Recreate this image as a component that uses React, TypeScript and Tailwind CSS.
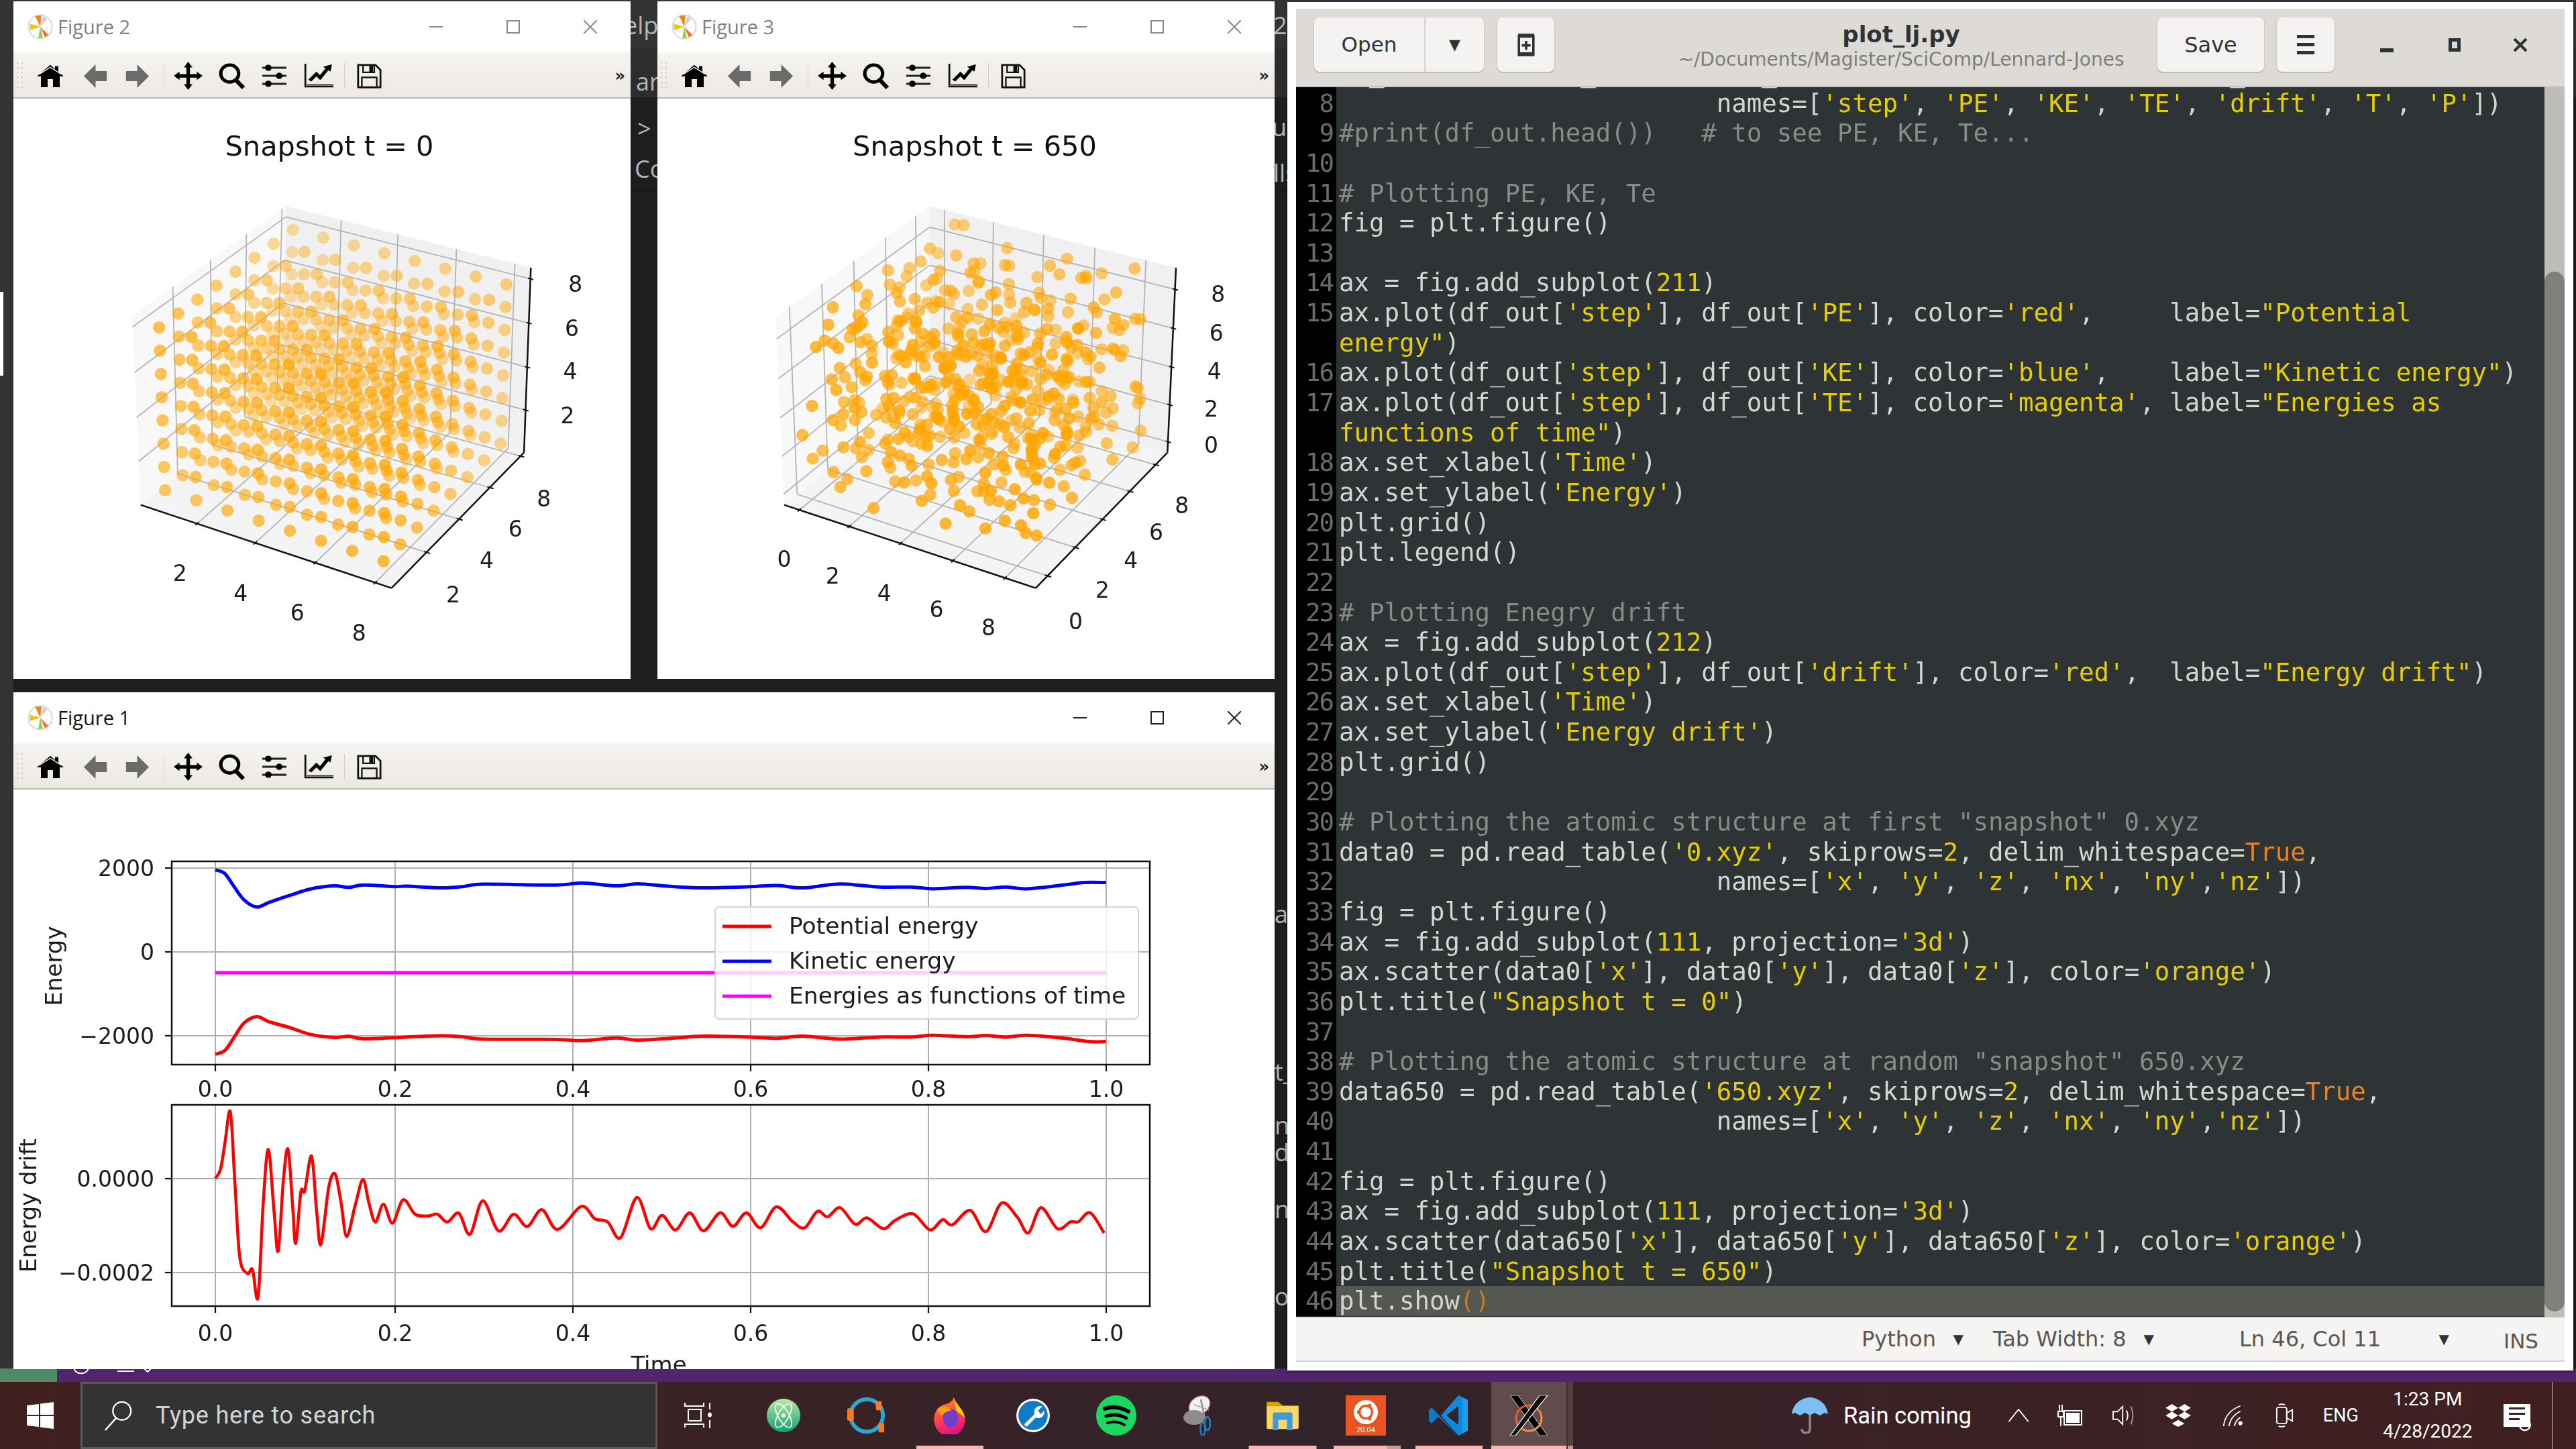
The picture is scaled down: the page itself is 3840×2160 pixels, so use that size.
import React from "react";

type V = [number, number];
const lerp = (a: V, b: V, t: number): V => [a[0] + (b[0] - a[0]) * t, a[1] + (b[1] - a[1]) * t];

function smooth(pts: V[]): string {
  let d = `M${pts[0][0].toFixed(1)} ${pts[0][1].toFixed(1)}`;
  for (let i = 0; i < pts.length - 1; i++) {
    const p0 = pts[i - 1] || pts[i];
    const p1 = pts[i];
    const p2 = pts[i + 1];
    const p3 = pts[i + 2] || p2;
    const c1: V = [p1[0] + (p2[0] - p0[0]) / 6, p1[1] + (p2[1] - p0[1]) / 6];
    const c2: V = [p2[0] - (p3[0] - p1[0]) / 6, p2[1] - (p3[1] - p1[1]) / 6];
    d += `C${c1[0].toFixed(1)} ${c1[1].toFixed(1)} ${c2[0].toFixed(1)} ${c2[1].toFixed(1)} ${p2[0].toFixed(1)} ${p2[1].toFixed(1)}`;
  }
  return d;
}

function prng(seed: number) {
  let a = seed;
  return () => {
    a |= 0;
    a = (a + 0x6d2b79f5) | 0;
    let t = Math.imul(a ^ (a >>> 15), 1 | a);
    t = (t + Math.imul(t ^ (t >>> 7), 61 | t)) ^ t;
    return ((t ^ (t >>> 14)) >>> 0) / 4294967296;
  };
}

type Cfg = {
  ox: number; oy: number;
  A: V; B: V; C: V; D: V; Ap: V; Bp: V; Cp: V; Dp: V;
  xt: number[]; yt: number[]; zt: number[];
  xl: [string, number, number][]; yl: [string, number, number][]; zl: [string, number, number][];
  title: string; tx: number;
  dots: [number, number, number][];
  vb: string;
  base: number;
  span: number;
};

const grid3: [number, number, number][] = [];
for (let i = 0; i < 8; i++) for (let j = 0; j < 8; j++) for (let k = 0; k < 8; k++)
  grid3.push([0.06 + (0.87 * i) / 7, 0.07 + (0.88 * j) / 7, 0.06 + (0.86 * k) / 7]);

const rnd = prng(650);
const scatter: [number, number, number][] = [];
for (let i = 0; i < 8; i++) for (let j = 0; j < 8; j++) for (let k = 0; k < 8; k++)
  scatter.push([
    0.1 + (0.8 * i) / 7 + (rnd() - 0.5) * 0.12,
    0.1 + (0.8 * j) / 7 + (rnd() - 0.5) * 0.12,
    0.13 + (0.8 * k) / 7 + (rnd() - 0.5) * 0.12,
  ]);

function Cube({ c }: { c: Cfg }) {
  const S = (p: V): V => [c.ox + p[0] * 0.5102, c.oy + p[1] * 0.4592];
  const h = (a: V, b: V): V => [b[0] - a[0], b[1] - a[1]];
  const hA = h(c.A, c.Ap), hB = h(c.B, c.Bp), hC = h(c.C, c.Cp), hD = h(c.D, c.Dp);
  const proj = (t: number, u: number, v: number): V => {
    const f = lerp(lerp(c.A, c.B, t), lerp(c.D, c.C, t), u);
    const hh = lerp(lerp(hA, hB, t), lerp(hD, hC, t), u);
    return S([f[0] + hh[0] * v, f[1] + hh[1] * v]);
  };
  const poly = (ps: V[]) => ps.map((p) => S(p).map((n) => n.toFixed(1)).join(",")).join(" ");
  const L = ({ a, b, k = "#b4b4b4", w = 1.8 }: { a: V; b: V; k?: string; w?: number }) => (
    <line x1={a[0]} y1={a[1]} x2={b[0]} y2={b[1]} stroke={k} strokeWidth={w} />
  );
  const sorted = [...c.dots].sort((p, q) => q[1] - q[0] * 0.4 - q[2] * 0.2 - (p[1] - p[0] * 0.4 - p[2] * 0.2));
  return (
    <svg viewBox={c.vb} className="block w-full h-full font-['DejaVu_Sans',sans-serif] blur-[0.6px]">
      <polygon points={poly([c.A, c.Ap, c.Dp, c.D])} fill="#f8f8f8" />
      <polygon points={poly([c.D, c.Dp, c.Cp, c.C])} fill="#f0f0f0" />
      <polygon points={poly([c.A, c.B, c.C, c.D])} fill="#f4f4f4" />
      {c.xt.map((t, i) => (
        <g key={i}>
          <L a={proj(t, 0, 0)} b={proj(t, 1, 0)} />
          <L a={proj(t, 1, 0)} b={proj(t, 1, 1)} />
          <L a={proj(t, -0.012, 0)} b={proj(t, 0.012, 0)} k="#111" w={2} />
        </g>
      ))}
      {c.yt.map((u, i) => (
        <g key={i}>
          <L a={proj(1, u, 0)} b={proj(0, u, 0)} />
          <L a={proj(0, u, 0)} b={proj(0, u, 1)} />
          <L a={proj(0.99, u, 0)} b={proj(1.015, u, 0)} k="#111" w={2} />
        </g>
      ))}
      {c.zt.map((v, i) => (
        <g key={i}>
          <L a={proj(1, 1, v)} b={proj(0, 1, v)} />
          <L a={proj(0, 1, v)} b={proj(0, 0, v)} />
          <L a={proj(0.99, 1, v)} b={proj(1.012, 1, v)} k="#111" w={2} />
        </g>
      ))}
      <L a={S(c.A)} b={S(c.B)} k="#111" w={2.5} />
      <L a={S(c.B)} b={S(c.C)} k="#111" w={2.5} />
      <L a={S(c.C)} b={S(c.Cp)} k="#111" w={2.5} />
      {sorted.map(([t, u, v], i) => {
        const p = proj(t, u, v);
        const a = c.base + c.span * ((1 - u) * 0.6 + t * 0.25 + v * 0.15);
        return <circle key={i} cx={p[0].toFixed(1)} cy={p[1].toFixed(1)} r="9.2" fill="#ffa500" fillOpacity={a.toFixed(2)} />;
      })}
      {[...c.xl, ...c.yl, ...c.zl].map(([s, x, y], i) => {
        const p = S([x, y]);
        return (
          <text key={i} x={p[0]} y={p[1] + 12} textAnchor="middle" fontSize="33" className="fill-[#1c1c1c]">{s}</text>
        );
      })}
      <text x={c.tx} y="230" textAnchor="middle" fontSize="41.5" className="fill-[#111]">{c.title}</text>
    </svg>
  );
}

const fig2: Cfg = {
  ox: 100, oy: 280,
  A: [215, 1025], B: [948, 1295], C: [1335, 855], D: [625, 640],
  Ap: [190, 410], Bp: [958, 655], Cp: [1355, 255], Dp: [640, 55],
  xt: [0.225, 0.457, 0.696, 0.935], yt: [0.264, 0.509, 0.742, 0.974], zt: [0.23, 0.462, 0.7, 0.94],
  xl: [["2", 330, 1245], ["4", 507, 1310], ["6", 673, 1375], ["8", 853, 1440]],
  yl: [["2", 1128, 1315], ["4", 1226, 1205], ["6", 1310, 1103], ["8", 1393, 1003]],
  zl: [["2", 1462, 733], ["4", 1470, 590], ["6", 1475, 450], ["8", 1485, 307]],
  title: "Snapshot t = 0", tx: 491, dots: grid3, vb: "20 0 920 1015", base: 0.24, span: 0.62,
};
const fig3: Cfg = {
  ox: 1100, oy: 280,
  A: [135, 1025], B: [870, 1295], C: [1255, 855], D: [560, 640],
  Ap: [110, 415], Bp: [880, 655], Cp: [1280, 255], Dp: [560, 55],
  xt: [0.061, 0.259, 0.463, 0.671, 0.878], yt: [0.09, 0.3, 0.507, 0.714, 0.91], zt: [0.058, 0.258, 0.463, 0.672, 0.883],
  xl: [["0", 135, 1200], ["2", 277, 1255], ["4", 428, 1310], ["6", 580, 1363], ["8", 732, 1423]],
  yl: [["0", 987, 1403], ["2", 1065, 1300], ["4", 1148, 1205], ["6", 1222, 1113], ["8", 1297, 1025]],
  zl: [["0", 1383, 830], ["2", 1383, 712], ["4", 1392, 590], ["6", 1398, 465], ["8", 1403, 340]],
  title: "Snapshot t = 650", tx: 1453, dots: scatter, vb: "980 0 920 1015", base: 0.38, span: 0.55,
};

const z6 = (p: V): V => [p[0] * 0.638, 1020 + p[1] * 0.357];
const z7 = (p: V): V => [p[0] * 0.638, 1560 + p[1] / 3];
const z11 = (p: V): V => [1000 + p[0] * 0.587, 1270 + p[1] * 0.4464];

const bluePts: V[] = [
  ...([[503,775],[525,790],[545,840],[570,900],[600,930],[630,910],[680,880],[725,855],[780,842],[815,848],[850,838],[920,845],[950,843],[1030,850],[1080,845],[1130,835],[1300,838],[1360,830],[1440,842],[1490,833]] as V[]).map(z6),
  ...([[0,115],[85,120],[200,116],[270,112],[335,120],[430,107],[530,117],[610,117],[665,123],[750,118],[800,122],[850,117],[905,123],[1000,110],[1050,102],[1105,102]] as V[]).map(z11),
];
const redPts: V[] = [
  ...([[503,1545],[525,1530],[545,1480],[570,1415],[600,1388],[630,1410],[680,1435],[725,1462],[780,1475],[815,1470],[850,1480],[950,1473],[1030,1468],[1080,1472],[1130,1482],[1300,1483],[1360,1488],[1440,1477],[1490,1486]] as V[]).map(z6),
  ...([[0,622],[85,615],[200,618],[270,622],[335,615],[430,625],[530,618],[610,618],[665,612],[750,617],[800,613],[850,618],[905,612],[1000,622],[1060,633],[1105,633]] as V[]).map(z11),
];
const driftPts: V[] = [
  ...([[503,590],[515,550],[525,440],[538,290],[548,580],[560,940],[578,1015],[590,998],[603,1120],[615,700],[627,460],[640,730],[650,915],[662,600],[673,460],[684,720],[691,880],[703,650],[712,645],[728,490],[740,740],[750,885],[768,630],[783,570],[797,700],[810,850],[830,710],[848,595],[862,700],[877,785],[896,705],[917,790],[942,685],[970,750],[1000,758],[1022,750],[1045,785],[1072,745],[1098,840],[1128,690],[1165,825],[1200,750],[1232,805],[1266,730],[1303,818],[1358,715],[1390,770],[1420,785],[1450,855],[1488,675],[1520,815],[1547,755]] as V[]).map(z7),
  ...([[12,1262],[48,1205],[83,1265],[125,1205],[158,1250],[192,1205],[228,1255],[268,1185],[310,1235],[340,1255],[372,1200],[398,1218],[430,1188],[468,1243],[498,1222],[540,1258],[570,1230],[615,1208],[658,1262],[690,1228],[715,1245],[760,1197],[800,1268],[840,1172],[880,1220],[908,1272],[940,1188],[982,1258],[1015,1235],[1035,1235],[1065,1205],[1100,1272]] as V[]).map(z11),
];

function EnergyPlot() {
  const gx = [321, 589, 854, 1119, 1384, 1649];
  const lab = ["0.0", "0.2", "0.4", "0.6", "0.8", "1.0"];
  return (
    <svg viewBox="20 1032 1880 1009" className="block w-full h-full font-['DejaVu_Sans',sans-serif] blur-[0.6px]">
      {gx.map((x, i) => (
        <g key={i}>
          <line x1={x} x2={x} y1="1284" y2="1587" stroke="#b0b0b0" strokeWidth="2" />
          <line x1={x} x2={x} y1="1647" y2="1947" stroke="#b0b0b0" strokeWidth="2" />
          <line x1={x} x2={x} y1="1587" y2="1597" stroke="#111" strokeWidth="2.2" />
          <line x1={x} x2={x} y1="1947" y2="1957" stroke="#111" strokeWidth="2.2" />
          <text x={x} y="1635" textAnchor="middle" fontSize="33" className="fill-[#1c1c1c]">{lab[i]}</text>
          <text x={x} y="1999" textAnchor="middle" fontSize="33" className="fill-[#1c1c1c]">{lab[i]}</text>
        </g>
      ))}
      {[[1294, "2000"], [1419, "0"], [1544, "\u22122000"], [1757, "0.0000"], [1897, "\u22120.0002"]].map(([y, s], i) => (
        <g key={i}>
          <line x1="256" x2="1714" y1={y as number} y2={y as number} stroke="#b0b0b0" strokeWidth="2" />
          <line x1="246" x2="256" y1={y as number} y2={y as number} stroke="#111" strokeWidth="2.2" />
          <text x="230" y={(y as number) + 12} textAnchor="end" fontSize="33" className="fill-[#1c1c1c]">{s as string}</text>
        </g>
      ))}
      <line x1="321" x2="1649" y1="1450" y2="1450" stroke="#ff00ff" strokeWidth="5" />
      <path d={smooth(bluePts)} fill="none" stroke="#0000ff" strokeWidth="5" />
      <path d={smooth(redPts)} fill="none" stroke="#ff0000" strokeWidth="5" />
      <path d={smooth(driftPts)} fill="none" stroke="#ff0000" strokeWidth="4.5" />
      <rect x="256" y="1284" width="1458" height="303" fill="none" stroke="#111" strokeWidth="2.5" />
      <rect x="256" y="1647" width="1458" height="300" fill="none" stroke="#111" strokeWidth="2.5" />
      <rect x="1066" y="1352" width="631" height="167" rx="6" fill="#fff" fillOpacity="0.8" stroke="#d4d4d4" strokeWidth="2" />
      <line x1="1077" x2="1150" y1="1381" y2="1381" stroke="#ff0000" strokeWidth="5" />
      <line x1="1077" x2="1150" y1="1433" y2="1433" stroke="#0000ff" strokeWidth="5" />
      <line x1="1077" x2="1150" y1="1485" y2="1485" stroke="#ff00ff" strokeWidth="5" />
      <text x="1176" y="1392" fontSize="34.5" className="fill-[#1c1c1c]">Potential energy</text>
      <text x="1176" y="1444" fontSize="34.5" className="fill-[#1c1c1c]">Kinetic energy</text>
      <text x="1176" y="1496" fontSize="34.5" className="fill-[#1c1c1c]">Energies as functions of time</text>
      <text transform="translate(92 1440) rotate(-90)" textAnchor="middle" fontSize="34" className="fill-[#1c1c1c]">Energy</text>
      <text transform="translate(54 1797) rotate(-90)" textAnchor="middle" fontSize="34" className="fill-[#1c1c1c]">Energy drift</text>
      <text x="982" y="2046" textAnchor="middle" fontSize="34" className="fill-[#1c1c1c]">Time</text>
    </svg>
  );
}

function MplLogo() {
  return (
    <svg viewBox="0 0 40 40" className="w-[40px] h-[38px] shrink-0">
      <circle cx="20" cy="20" r="18.5" fill="#fff" stroke="#d5d5d5" strokeWidth="2" />
      <path d="M20 20 L12 3 L22 2 Z" fill="#f58220" />
      <path d="M20 20 L33 33 L27 36 Z" fill="#ed7030" />
      <path d="M20 20 L4 15 L4 25 Z" fill="#f4c20d" />
      <path d="M20 20 L24 37 L17 38 Z" fill="#8fce4a" />
      <path d="M20 20 L31 8 L25 3 Z" fill="#cfcfcf" />
    </svg>
  );
}

const Ic = ({ children, w = 40, h = 40, vb = "0 0 40 40" }: { children: React.ReactNode; w?: number; h?: number; vb?: string }) => (
  <svg viewBox={vb} width={w} height={h} preserveAspectRatio="none">{children}</svg>
);

function ToolBar() {
  return (
    <div className="h-[69px] shrink-0 flex items-center bg-gradient-to-b from-[#f6f4f0] to-[#ece9e3] border-b-2 border-[#bdb9b3] pl-[5px] pr-[8px] pt-[3px]">
      <div className="w-[10px] h-[40px] mr-[9px] grid grid-cols-2 gap-[3px]">
        {Array.from({ length: 12 }).map((_, i) => (
          <span key={i} className="block w-[2px] h-[2px] bg-[#c9c6c0]" />
        ))}
      </div>
      <div className="w-[62px] flex justify-center">
        <Ic w={40} h={34}>
          <path d="M20 1 L27 8 V3 H32 V13 L40 21 H34 V40 H24 V26 H16 V40 H6 V21 H0 Z" fill="#000" />
          <path d="M4 17 L20 5 L36 17" fill="none" stroke="#fff" strokeWidth="1.5" />
        </Ic>
      </div>
      <div className="w-[62px] ml-[5px] flex justify-center">
        <Ic w={37} h={37}><path d="M20 1 L1 20 L20 39 V28 H38 V12 H20 Z" fill="#6b6b6b" /></Ic>
      </div>
      <div className="w-[62px] flex justify-center">
        <Ic w={37} h={37}><path d="M20 1 L39 20 L20 39 V28 H2 V12 H20 Z" fill="#6b6b6b" /></Ic>
      </div>
      <span className="w-[1px] h-[38px] ml-[9px] bg-[#d4d1cb]" />
      <div className="w-[62px] ml-[4px] flex justify-center">
        <Ic w={43} h={42}>
          <path d="M20 0 L26 8 H22.5 V17.5 H32 V14 L40 20 L32 26 V22.5 H22.5 V32 H26 L20 40 L14 32 H17.5 V22.5 H8 V26 L0 20 L8 14 V17.5 H17.5 V8 H14 Z" fill="#000" />
        </Ic>
      </div>
      <div className="w-[62px] ml-[3px] flex justify-center">
        <Ic w={41} h={39}>
          <circle cx="17" cy="16" r="13" fill="none" stroke="#000" strokeWidth="5" />
          <path d="M26 26 L37 38" stroke="#000" strokeWidth="6" />
        </Ic>
      </div>
      <div className="w-[62px] ml-[2px] flex justify-center">
        <Ic w={36} h={34}>
          <path d="M0 6 H40 M0 20 H40 M0 34 H40" stroke="#222" strokeWidth="3.5" />
          <circle cx="10" cy="6" r="5.5" fill="#000" />
          <circle cx="28" cy="20" r="5.5" fill="#000" />
          <circle cx="10" cy="34" r="5.5" fill="#000" />
        </Ic>
      </div>
      <div className="w-[62px] ml-[4px] flex justify-center">
        <Ic w={44} h={36}>
          <path d="M2 0 V38 H40" fill="none" stroke="#111" strokeWidth="2.5" />
          <path d="M4 35 H40" stroke="#555" strokeWidth="3" />
          <path d="M8 28 L17 17 L22 23 L32 8" fill="none" stroke="#000" strokeWidth="5" />
          <path d="M26 5 L38 1 L36 13 Z" fill="#000" />
        </Ic>
      </div>
      <span className="w-[1px] h-[38px] ml-[7px] bg-[#d4d1cb]" />
      <div className="w-[62px] ml-[5px] flex justify-center">
        <Ic w={37} h={37}>
          <path d="M2 2 H30 L38 10 V38 H2 Z" fill="none" stroke="#111" strokeWidth="3" />
          <path d="M10 2 V14 H28 V2" fill="none" stroke="#111" strokeWidth="2.5" />
          <rect x="20" y="3" width="6" height="10" fill="#111" />
          <rect x="8" y="22" width="24" height="16" fill="none" stroke="#111" strokeWidth="2.5" />
        </Ic>
      </div>
      <span className="ml-auto text-[24px] leading-none font-bold font-['DejaVu_Sans',sans-serif] text-[#222]">»</span>
    </div>
  );
}

function FigWindow({ pos, title, active, children }: { pos: string; title: string; active?: boolean; children: React.ReactNode }) {
  const stroke = active ? "#222" : "#8a8a8a";
  return (
    <div className={"absolute flex flex-col bg-white overflow-hidden " + pos}>
      <div className="h-[76px] shrink-0 flex items-center pl-[20px] bg-white">
        <MplLogo />
        <span className={"ml-[6px] text-[29px] leading-[40px] font-['Open_Sans',sans-serif] " + (active ? "text-[#111]" : "text-[#808080]")}>{title}</span>
        <div className="ml-auto mr-[3px] flex">
          <div className="w-[115px] flex justify-center"><svg width="20" height="20"><path d="M0 10 H20" stroke={stroke} strokeWidth="2" /></svg></div>
          <div className="w-[115px] flex justify-center"><svg width="20" height="20"><rect x="1" y="1" width="18" height="18" fill="none" stroke={stroke} strokeWidth="2" /></svg></div>
          <div className="w-[115px] flex justify-center"><svg width="20" height="20"><path d="M0 0 L20 20 M20 0 L0 20" stroke={stroke} strokeWidth="2" /></svg></div>
        </div>
      </div>
      <ToolBar />
      {children}
    </div>
  );
}

type Row = { n?: number; t?: string; cont?: string; cur?: boolean };
const rows: Row[] = [
  { t: "  _             _           _                              _" },
  { n: 8, t: "                         names=['step', 'PE', 'KE', 'TE', 'drift', 'T', 'P'])" },
  { n: 9, t: "#print(df_out.head())   # to see PE, KE, Te..." },
  { n: 10 },
  { n: 11, t: "# Plotting PE, KE, Te" },
  { n: 12, t: "fig = plt.figure()" },
  { n: 13 },
  { n: 14, t: "ax = fig.add_subplot(211)" },
  { n: 15, t: "ax.plot(df_out['step'], df_out['PE'], color='red',     label=\"Potential" },
  { cont: "energy\"", t: ")" },
  { n: 16, t: "ax.plot(df_out['step'], df_out['KE'], color='blue',    label=\"Kinetic energy\")" },
  { n: 17, t: "ax.plot(df_out['step'], df_out['TE'], color='magenta', label=\"Energies as" },
  { cont: "functions of time\"", t: ")" },
  { n: 18, t: "ax.set_xlabel('Time')" },
  { n: 19, t: "ax.set_ylabel('Energy')" },
  { n: 20, t: "plt.grid()" },
  { n: 21, t: "plt.legend()" },
  { n: 22 },
  { n: 23, t: "# Plotting Enegry drift" },
  { n: 24, t: "ax = fig.add_subplot(212)" },
  { n: 25, t: "ax.plot(df_out['step'], df_out['drift'], color='red',  label=\"Energy drift\")" },
  { n: 26, t: "ax.set_xlabel('Time')" },
  { n: 27, t: "ax.set_ylabel('Energy drift')" },
  { n: 28, t: "plt.grid()" },
  { n: 29 },
  { n: 30, t: "# Plotting the atomic structure at first \"snapshot\" 0.xyz" },
  { n: 31, t: "data0 = pd.read_table('0.xyz', skiprows=2, delim_whitespace=True," },
  { n: 32, t: "                         names=['x', 'y', 'z', 'nx', 'ny','nz'])" },
  { n: 33, t: "fig = plt.figure()" },
  { n: 34, t: "ax = fig.add_subplot(111, projection='3d')" },
  { n: 35, t: "ax.scatter(data0['x'], data0['y'], data0['z'], color='orange')" },
  { n: 36, t: "plt.title(\"Snapshot t = 0\")" },
  { n: 37 },
  { n: 38, t: "# Plotting the atomic structure at random \"snapshot\" 650.xyz" },
  { n: 39, t: "data650 = pd.read_table('650.xyz', skiprows=2, delim_whitespace=True," },
  { n: 40, t: "                         names=['x', 'y', 'z', 'nx', 'ny','nz'])" },
  { n: 41 },
  { n: 42, t: "fig = plt.figure()" },
  { n: 43, t: "ax = fig.add_subplot(111, projection='3d')" },
  { n: 44, t: "ax.scatter(data650['x'], data650['y'], data650['z'], color='orange')" },
  { n: 45, t: "plt.title(\"Snapshot t = 650\")" },
  { n: 46, t: "plt.show", cur: true },
];

function Tok({ s }: { s: string }) {
  const out: React.ReactNode[] = [];
  const re = /(#.*$)|('[^']*'|"[^"]*"?)|(\bTrue\b)|(\b\d+\b)/g;
  let last = 0;
  let m: RegExpExecArray | null;
  let i = 0;
  while ((m = re.exec(s))) {
    if (m.index > last) out.push(s.slice(last, m.index));
    const cls = m[1] ? "text-[#888a85]" : m[3] ? "text-[#e8821e]" : "text-[#e6cf00]";
    out.push(<span key={i++} className={cls}>{m[0]}</span>);
    last = m.index + m[0].length;
  }
  if (last < s.length) out.push(s.slice(last));
  return <>{out}</>;
}

function Gedit() {
  return (
    <div className="absolute left-[1919px] top-[3px] w-[1917px] h-[2040px] bg-white flex flex-col pt-[10px] pl-[13px] pr-[13px] pb-[13px] font-['DejaVu_Sans',sans-serif] shadow-[0_2px_4px_rgba(0,0,0,0.4)]">
      <div className="h-[117px] shrink-0 bg-[#dedbd7] border-b-2 border-[#c8c5c0] flex items-center pb-[8px]">
        <div className="ml-[27px] w-[253px] h-[81px] flex rounded-[8px] bg-[#f4f3f1] shadow-[0_1px_2px_rgba(0,0,0,0.3)] text-[#2e3436] text-[31px]">
          <span className="w-[166px] flex items-center justify-center border-r-2 border-[#d8d5d0]">Open</span>
          <span className="flex-1 flex items-center justify-center text-[22px]">▼</span>
        </div>
        <div className="ml-[20px] w-[85px] h-[81px] flex items-center justify-center rounded-[8px] bg-[#f4f3f1] shadow-[0_1px_2px_rgba(0,0,0,0.3)]">
          <svg viewBox="0 0 30 30" className="w-[36px] h-[36px]">
            <path d="M6 4 H24 V27 H6 Z" fill="none" stroke="#2e3436" strokeWidth="3" />
            <rect x="5" y="1" width="20" height="5" fill="#2e3436" />
            <rect x="5" y="24" width="20" height="5" fill="#2e3436" />
            <path d="M15 10 V21 M9.5 15.5 H20.5" stroke="#2e3436" strokeWidth="3" />
          </svg>
        </div>
        <div className="ml-[135px] mt-[7px] w-[764px] flex flex-col items-center">
          <span className="text-[34px] leading-[38px] font-bold text-[#2e3436]">plot_lj.py</span>
          <span className="text-[28px] leading-[38px] text-[#7c7f7a]">~/Documents/Magister/SciComp/Lennard-Jones</span>
        </div>
        <div className="w-[159px] h-[81px] flex items-center justify-center rounded-[8px] bg-[#f4f3f1] shadow-[0_1px_2px_rgba(0,0,0,0.3)] text-[#2e3436] text-[32px]">Save</div>
        <div className="ml-[19px] w-[86px] h-[81px] flex flex-col gap-[7px] items-center justify-center rounded-[8px] bg-[#f4f3f1] shadow-[0_1px_2px_rgba(0,0,0,0.3)]">
          <span className="w-[26px] h-[5px] bg-[#2e3436]" />
          <span className="w-[26px] h-[5px] bg-[#2e3436]" />
          <span className="w-[26px] h-[5px] bg-[#2e3436]" />
        </div>
        <span className="ml-[68px] mt-[16px] w-[20px] h-[6px] bg-[#2e3436]" />
        <span className="ml-[82px] w-[18px] h-[20px] border-[5px] border-[#2e3436]" />
        <svg viewBox="0 0 22 22" className="ml-[78px] w-[22px] h-[22px]"><path d="M2 2 L20 20 M20 2 L2 20" stroke="#2e3436" strokeWidth="4" /></svg>
      </div>
      <div className="flex-1 min-h-0 flex">
        <div className="flex-1 min-w-0 overflow-hidden bg-[#2e3436]">
          <div className="-mt-[43px] font-['DejaVu_Sans_Mono',monospace] text-[37.4px] leading-[44.65px] text-[#d3d7cf] whitespace-pre blur-[0.4px]">
            {rows.map((r, i) => (
              <div key={i} className={r.cur ? "flex h-[44.65px] bg-[#555753]" : "flex h-[44.65px]"}>
                <span className="w-[60px] pr-[5px] shrink-0 bg-black text-right text-[#6a6c67] overflow-hidden tracking-[-2px]">{r.n ?? ""}</span>
                <span className="pl-[4px]">
                  {r.cont ? <span className="text-[#e6cf00]">{r.cont}</span> : null}
                  {r.t ? <Tok s={r.t} /> : null}
                  {r.cur ? <span className="text-[#c9771a]">()</span> : null}
                </span>
              </div>
            ))}
          </div>
        </div>
        <div className="w-[30px] shrink-0 bg-[#bfbdb8] flex justify-center">
          <span className="mt-[275px] mb-[8px] w-[17px] flex-1 rounded-full bg-[#807f7c]" />
        </div>
      </div>
      <div className="h-[67px] shrink-0 bg-[#f5f4f2] border-b-2 border-[#d6d3ce] border-t border-t-[#c8c5c0] flex items-center text-[32px] text-[#555753]">
        <span className="ml-[843px] w-[152px] flex justify-between items-center">Python <span className="text-[20px] text-[#2e3436]">▼</span></span>
        <span className="ml-[44px] w-[240px] flex justify-between items-center">Tab Width: 8 <span className="text-[20px] text-[#2e3436]">▼</span></span>
        <span className="ml-[127px] w-[313px] flex justify-between items-center">Ln 46, Col 11 <span className="text-[20px] text-[#2e3436]">▼</span></span>
        <span className="ml-[81px] text-[31px] mt-[6px]">INS</span>
      </div>
    </div>
  );
}

/* ---------- taskbar icons ---------- */
const Atom = () => (
  <svg viewBox="0 0 52 56" className="w-[52px] h-[56px]">
    <defs><linearGradient id="ag" x1="0" y1="0" x2="0" y2="1"><stop offset="0" stopColor="#b9e6a6" /><stop offset="1" stopColor="#0ea36c" /></linearGradient></defs>
    <circle cx="26" cy="28" r="25" fill="url(#ag)" />
    <g fill="none" stroke="#fff" strokeWidth="1.6">
      <ellipse cx="26" cy="28" rx="8" ry="20" transform="rotate(30 26 28)" />
      <ellipse cx="26" cy="28" rx="8" ry="20" transform="rotate(-30 26 28)" />
    </g>
    <circle cx="26" cy="28" r="3" fill="#fff" />
  </svg>
);
const Ring = () => (
  <svg viewBox="0 0 60 60" className="w-[58px] h-[58px]">
    <circle cx="30" cy="30" r="25" fill="none" stroke="#2aa7d4" strokeWidth="6" />
    <rect x="0" y="19" width="10" height="19" rx="2" fill="#f97c1c" />
    <rect x="44" y="8" width="9" height="14" rx="2" fill="#f97c1c" />
    <rect x="48" y="42" width="9" height="14" rx="2" fill="#f97c1c" />
  </svg>
);
const Firefox = () => (
  <svg viewBox="0 0 52 58" className="w-[52px] h-[56px]">
    <defs><linearGradient id="ff" x1="0" y1="0" x2="0.3" y2="1"><stop offset="0" stopColor="#ff980e" /><stop offset="0.6" stopColor="#ff3f4f" /><stop offset="1" stopColor="#e31587" /></linearGradient></defs>
    <path d="M32 1 C35 12 46 18 49 30 A24 26 0 1 1 3 26 C6 18 12 14 18 12 C24 10 30 8 32 1 Z" fill="url(#ff)" />
    <path d="M32 1 C35 12 46 18 49 32 L36 22 Z" fill="#ffd000" />
    <ellipse cx="27" cy="33" rx="12" ry="14" fill="#6e3fc9" />
    <path d="M6 20 C12 14 24 12 28 22 C20 22 16 26 14 30 Z" fill="#ff9a16" />
  </svg>
);
const Wrench = () => (
  <svg viewBox="0 0 50 50" className="w-[52px] h-[52px]">
    <circle cx="25" cy="25" r="24" fill="#fff" />
    <circle cx="25" cy="25" r="21" fill="#0f7cc4" />
    <path d="M12 38 L27 23 C25 16 31 10 38 12 L32 18 L36 23 L41 18 C42 26 35 31 29 28 L16 41 Z" fill="#fff" />
  </svg>
);
const Spotify = () => (
  <svg viewBox="0 0 60 60" className="w-[60px] h-[60px]">
    <circle cx="30" cy="30" r="30" fill="#1ed760" />
    <g fill="none" stroke="#000" strokeLinecap="round">
      <path d="M13 20 Q30 14 48 24" strokeWidth="6" />
      <path d="M15 31 Q30 26 45 34" strokeWidth="5" />
      <path d="M17 41 Q30 37 42 44" strokeWidth="4" />
    </g>
  </svg>
);
const Snip = () => (
  <svg viewBox="0 0 60 60" className="w-[60px] h-[60px]">
    <ellipse cx="30" cy="15" rx="17" ry="13" transform="rotate(-35 30 15)" fill="#f1f1f1" stroke="#c6474c" strokeWidth="1.2" />
    <ellipse cx="22" cy="33" rx="16" ry="11" fill="#8e8b8e" />
    <path d="M32 6 L38 34" stroke="#8f8f8f" strokeWidth="2.5" />
    <path d="M22 14 L44 22" stroke="#a9a9a9" strokeWidth="1.5" />
    <ellipse cx="42" cy="42" rx="4" ry="10" fill="none" stroke="#1b7fc4" strokeWidth="2.6" />
    <ellipse cx="35" cy="50" rx="3.5" ry="10" fill="none" stroke="#1b7fc4" strokeWidth="2.6" />
  </svg>
);
const Folder = () => (
  <svg viewBox="0 0 54 48" className="w-[54px] h-[44px]">
    <path d="M1 2 H20 L27 8 H53 V12 H1 Z" fill="#d9a100" />
    <rect x="1" y="9" width="52" height="37" rx="2" fill="#fdd766" />
    <path d="M11 48 V22 Q11 19 14 19 H40 Q43 19 43 22 V48 H34 V31 H20 V48 Z" fill="#3f9bdc" />
  </svg>
);
const UbuntuIc = () => (
  <div className="w-[60px] h-[60px] bg-[#e95420] flex flex-col items-center pt-[6px]">
    <svg viewBox="0 0 40 40" className="w-[38px] h-[38px]">
      <circle cx="20" cy="20" r="19" fill="#fff" />
      <circle cx="20" cy="20" r="10" fill="none" stroke="#e95420" strokeWidth="3.5" />
      <circle cx="9" cy="20" r="3" fill="#e95420" /><circle cx="26" cy="10" r="3" fill="#e95420" /><circle cx="26" cy="30" r="3" fill="#e95420" />
    </svg>
    <span className="text-[11px] leading-[14px] text-[#ffe] font-['Liberation_Sans',sans-serif]">20.04</span>
  </div>
);
const VSCode = () => (
  <svg viewBox="0 0 60 60" className="w-[60px] h-[60px]">
    <path d="M44 0 L58 7 V53 L44 60 L44 0 Z" fill="#1f9cf0" />
    <path d="M44 60 L4 18 L0 22 V38 L4 42 L14 32 Z" fill="#0a7cc2" />
    <path d="M44 0 L50 4 V56 L44 60 L18 30 Z M44 16 L26 30 L44 44 Z" fill="#0d8bd9" fillRule="evenodd" />
  </svg>
);
const XIc = () => (
  <svg viewBox="0 0 60 60" className="w-[60px] h-[60px]">
    <path d="M2 0 H14 L58 60 H46 Z" fill="#000" stroke="#ddd" strokeWidth="1" />
    <circle cx="30" cy="34" r="19" fill="none" stroke="url(#xg)" strokeWidth="3" />
    <defs><linearGradient id="xg" x1="0" y1="0" x2="1" y2="1"><stop offset="0" stopColor="#d84a17" /><stop offset="1" stopColor="#e7b060" /></linearGradient></defs>
    <path d="M58 0 H46 L2 60 H10 Z" fill="#111" stroke="#fff" strokeWidth="1.2" />
  </svg>
);

const Slot = ({ children, cls = "" }: { children?: React.ReactNode; cls?: string }) => (
  <div className={"relative w-[124px] h-full shrink-0 flex items-center justify-center " + cls}>{children}</div>
);
const Under = ({ w = "w-[100px]" }: { w?: string }) => <span className={"absolute bottom-0 left-1/2 -translate-x-1/2 h-[5px] bg-[#ffb3ad] " + w} />;

function TaskBar() {
  return (
    <div className="h-[100px] shrink-0 flex items-center bg-gradient-to-r from-[#40201f] via-[#33232a] to-[#411f20] font-['Open_Sans',sans-serif] text-white">
      <div className="w-[120px] h-full flex items-center justify-center">
        <svg viewBox="0 0 40 40" className="w-[40px] h-[40px]">
          <path d="M0 5 L18 3 V19 H0 Z M20 2.5 L40 0 V19 H20 Z M0 21 H18 V37 L0 35 Z M20 21 H40 V40 L20 37.5 Z" fill="#fff" />
        </svg>
      </div>
      <div className="w-[860px] h-full bg-[#333333] border-[3px] border-[#5a5a5a] flex items-center pl-[30px]">
        <svg viewBox="0 0 46 48" className="w-[46px] h-[46px]">
          <circle cx="29" cy="17" r="14" fill="none" stroke="#fff" strokeWidth="2.4" />
          <path d="M20 28 L3 47" stroke="#fff" strokeWidth="2.6" />
        </svg>
        <span className="ml-[33px] text-[36px] text-[#d4d4d4] font-['Roboto',sans-serif] tracking-[0.8px]">Type here to search</span>
      </div>
      <Slot cls="-mr-[2px] -ml-[1px]">
        <svg viewBox="0 0 42 38" className="w-[42px] h-[38px]">
          <path d="M1 0 V5 H29 V0 M6 10 H25 V27 H6 Z M1 37 V32 H29 V37" fill="none" stroke="#fff" strokeWidth="2" />
          <path d="M38 0 V10 M38 26 V38" stroke="#fff" strokeWidth="2" />
          <ellipse cx="38" cy="18" rx="3" ry="3.5" fill="#fff" />
        </svg>
      </Slot>
      <Slot cls="ml-[5px]"><Atom /></Slot>
      <Slot><Ring /></Slot>
      <Slot><Firefox /><Under w="w-[100px]" /></Slot>
      <Slot><Wrench /></Slot>
      <Slot><Spotify /></Slot>
      <Slot><Snip /></Slot>
      <Slot><Folder /><Under w="w-[101px]" /></Slot>
      <Slot><UbuntuIc /><span className="absolute bottom-0 left-[14px] h-[5px] w-[80px] bg-[#ffb3ad]" /><span className="absolute bottom-0 left-[94px] h-[5px] w-[20px] bg-[#c99a94]" /></Slot>
      <Slot><VSCode /><Under w="w-[100px]" /></Slot>
      <div className="relative ml-[1px] w-[112px] h-full bg-[#624b4c] flex items-center justify-center shrink-0">
        <XIc />
        <span className="absolute bottom-0 inset-x-0 h-[5px] bg-[#ffb3ad]" />
      </div>
      <div className="relative w-[10px] h-full bg-[#55403f] border-l-2 border-[#3f3130] shrink-0">
        <span className="absolute bottom-0 inset-x-0 h-[5px] bg-[#c99a94]" />
      </div>

      <div className="ml-[326px] w-[54px] h-[56px] shrink-0">
        <svg viewBox="0 0 54 56" className="w-full h-full">
          <path d="M27 10 V48 Q27 54 21 54 Q15 54 15 48" fill="none" stroke="#8a8686" strokeWidth="3.5" />
          <path d="M0 26 C2 10 14 2 27 1 C40 2 52 10 54 26 L49 24 L42 28 L34 24 L27 28 L20 24 L12 28 L5 24 Z" fill="#7bc0f5" />
        </svg>
      </div>
      <span className="ml-[23px] text-[34.5px] leading-none whitespace-pre font-['Roboto',sans-serif]">Rain coming</span>
      <svg viewBox="0 0 34 22" className="ml-[54px] w-[32px] h-[20px] shrink-0"><path d="M1 21 L17 1 L33 21" fill="none" stroke="#fff" strokeWidth="2" /></svg>
      <svg viewBox="0 0 40 32" className="ml-[41px] w-[40px] h-[32px] shrink-0">
        <rect x="11" y="9" width="26" height="21" fill="none" stroke="#fff" strokeWidth="2" />
        <rect x="14" y="12" width="20" height="15" fill="#fff" />
        <path d="M4 0 V9 M8 0 V9 M2 10 H10 V18 H2 Z M6 18 V32" stroke="#fff" strokeWidth="2" fill="none" />
      </svg>
      <svg viewBox="0 0 40 36" className="ml-[43px] w-[38px] h-[36px] shrink-0">
        <path d="M1 12 H8 L16 4 V32 L8 24 H1 Z" fill="none" stroke="#fff" strokeWidth="2" />
        <path d="M22 10 Q26 18 22 26" fill="none" stroke="#fff" strokeWidth="2" />
        <path d="M29 4 Q35 18 29 32" fill="none" stroke="#999" strokeWidth="2" />
      </svg>
      <svg viewBox="0 0 40 36" className="ml-[40px] w-[40px] h-[34px] shrink-0">
        <path d="M10 0 L20 6 L10 12 L0 6 Z M30 0 L40 6 L30 12 L20 6 Z M10 12 L20 18 L10 24 L0 18 Z M30 12 L40 18 L30 24 L20 18 Z M20 25 L30 31 L20 36 L10 31 Z" fill="#fff" />
      </svg>
      <svg viewBox="0 0 36 36" className="ml-[45px] w-[34px] h-[32px] shrink-0">
        <path d="M2 36 Q4 12 30 2 M11 36 Q13 20 30 11 M20 36 Q22 26 30 21" fill="none" stroke="#fff" strokeWidth="2" />
        <circle cx="30" cy="31" r="3.5" fill="#fff" />
      </svg>
      <svg viewBox="0 0 30 38" className="ml-[46px] w-[28px] h-[36px] shrink-0">
        <rect x="2" y="6" width="16" height="26" rx="3" fill="none" stroke="#fff" strokeWidth="2" />
        <path d="M18 15 L27 10 V28 L18 23 Z" fill="none" stroke="#fff" strokeWidth="2" />
        <path d="M5 2 Q10 0 15 2 M5 36 Q10 38 15 36" fill="none" stroke="#fff" strokeWidth="2" />
      </svg>
      <span className="ml-[43px] text-[27px] leading-none font-['Roboto',sans-serif]">ENG</span>
      <div className="ml-[33px] w-[140px] shrink-0 flex flex-col items-center text-[28px] leading-[48px] font-['Roboto',sans-serif] whitespace-pre">
        <span>1:23 PM</span>
        <span>4/28/2022</span>
      </div>
      <div className="relative ml-[43px] w-[40px] h-[34px] bg-white shrink-0 flex flex-col gap-[5px] pt-[5px] pl-[8px]">
        <span className="w-[24px] h-[3px] bg-[#3a2020]" />
        <span className="w-[24px] h-[3px] bg-[#3a2020]" />
        <span className="w-[16px] h-[3px] bg-[#3a2020]" />
        <svg viewBox="0 0 20 20" className="absolute -right-[2px] -bottom-[7px] w-[20px] h-[20px]"><path d="M10 2 A8 8 0 1 1 2 12" fill="none" stroke="#fff" strokeWidth="2.5" /></svg>
      </div>
      <span className="ml-[32px] w-[2px] h-full bg-[#8a7270]" />
    </div>
  );
}

const BgBit = ({ cls, children }: { cls: string; children: React.ReactNode }) => (
  <span className={"absolute text-[36px] leading-none text-[#b5b5b5] font-['Open_Sans',sans-serif] whitespace-pre " + cls}>{children}</span>
);

export default function App() {
  return (
    <div className="relative w-[3840px] h-[2160px] overflow-hidden flex flex-col bg-[#1e1e1e]">
      <div className="flex-1 min-h-0 flex flex-col">
        <div className="flex-1 flex min-h-0">
          <div className="relative w-[20px] bg-[#333333]">
            <span className="absolute left-0 top-[435px] w-[5px] h-[125px] bg-white" />
          </div>
          <div className="flex-1 flex flex-col">
            <div className="h-[72px] bg-[#333333]" />
            <div className="h-[73px] bg-[#2d2d2d]" />
            <div className="h-[140px] bg-[#1e1e1e] border-b-2 border-[#161616]" />
            <div className="flex-1 bg-[#1e1e1e]" />
          </div>
        </div>
        <div className="h-[20px] shrink-0 flex bg-[#52246e]">
          <div className="w-[85px] bg-[#4f8a66]" />
          <svg viewBox="0 0 150 20" className="w-[150px] h-[20px] ml-[25px]">
            <path d="M0 0 A12 12 0 0 0 22 0" fill="none" stroke="#fff" strokeWidth="2" />
            <path d="M65 4 H90" stroke="#fff" strokeWidth="2" />
            <path d="M105 0 L110 5 L115 0" stroke="#fff" fill="none" strokeWidth="2" />
          </svg>
        </div>
      </div>

      <BgBit cls="left-[930px] top-[20px] text-[#8e8e8e]">elp</BgBit>
      <BgBit cls="left-[948px] top-[104px] text-[#9a9a9a]">ar</BgBit>
      <BgBit cls="left-[950px] top-[174px]">&gt;</BgBit>
      <BgBit cls="left-[946px] top-[234px]">Co</BgBit>
      <BgBit cls="left-[1898px] top-[20px] text-[#9a9a9a]">2.</BgBit>
      <BgBit cls="left-[1896px] top-[172px]">ur</BgBit>
      <BgBit cls="left-[1898px] top-[240px]">lls</BgBit>
      <BgBit cls="left-[1900px] top-[1345px]">a.</BgBit>
      <BgBit cls="left-[1900px] top-[1580px]">t_</BgBit>
      <BgBit cls="left-[1900px] top-[1660px]">nS</BgBit>
      <BgBit cls="left-[1900px] top-[1700px]">dl</BgBit>
      <BgBit cls="left-[1900px] top-[1785px]">nS</BgBit>
      <BgBit cls="left-[1900px] top-[1915px]">or</BgBit>

      <FigWindow pos="left-[20px] top-[2px] w-[920px] h-[1010px]" title="Figure 2">
        <div className="relative flex-1 min-h-0">
          <div className="absolute inset-x-0 -top-[145px] h-[1015px]"><Cube c={fig2} /></div>
        </div>
      </FigWindow>
      <FigWindow pos="left-[980px] top-[2px] w-[920px] h-[1010px]" title="Figure 3">
        <div className="relative flex-1 min-h-0">
          <div className="absolute inset-x-0 -top-[145px] h-[1015px]"><Cube c={fig3} /></div>
        </div>
      </FigWindow>
      <FigWindow pos="left-[20px] top-[1032px] w-[1880px] h-[1009px]" title="Figure 1" active>
        <div className="relative flex-1 min-h-0">
          <div className="absolute inset-x-0 -top-[145px] h-[1009px]"><EnergyPlot /></div>
        </div>
      </FigWindow>
      <Gedit />
      <TaskBar />
    </div>
  );
}
